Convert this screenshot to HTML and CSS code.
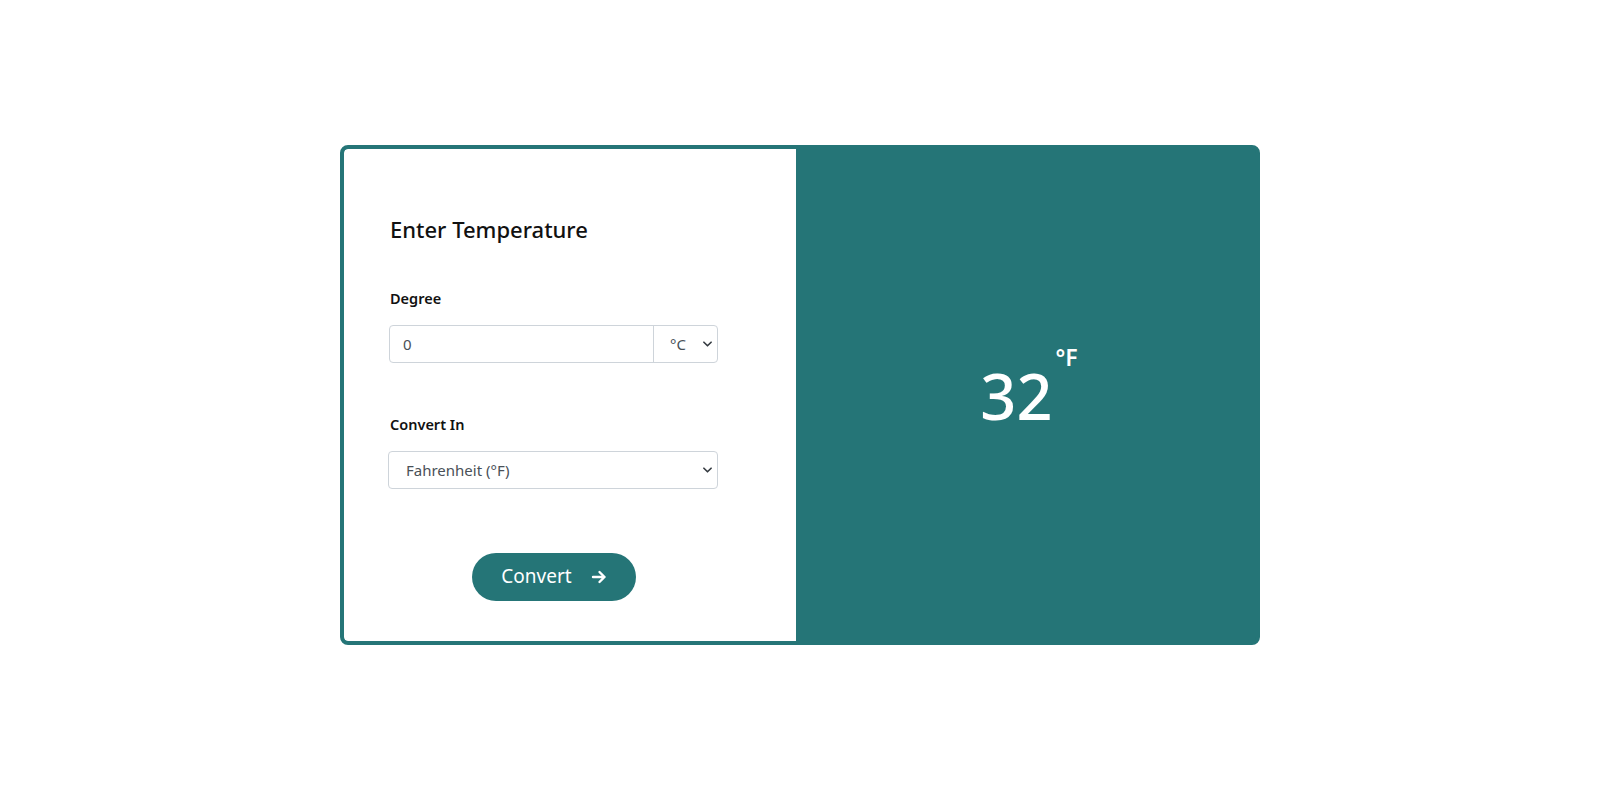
FILE: index.html
```html
<!DOCTYPE html>
<html lang="en">
<head>
<meta charset="utf-8">
<title>Temperature Converter</title>
<link rel="stylesheet" href="styles.css">
</head>
<body>
<main class="page">
  <section class="card">
    <div class="form-panel">
      <h2 class="title">Enter Temperature</h2>
      <label class="label" for="deg">Degree</label>
      <div class="input-group">
        <input id="deg" class="field" type="text" value="0">
        <div class="select-wrap unit">
          <select class="unit-select"><option>°C</option></select>
          <svg class="chev" viewBox="0 0 10 6" aria-hidden="true"><path d="M1 1l4 4 4-4" fill="none" stroke="#343a40" stroke-width="1.8" stroke-linecap="round" stroke-linejoin="round"/></svg>
        </div>
      </div>
      <label class="label label-second" for="to">Convert In</label>
      <div class="select-wrap full">
        <select id="to" class="full-select"><option>Fahrenheit (°F)</option></select>
        <svg class="chev" viewBox="0 0 10 6" aria-hidden="true"><path d="M1 1l4 4 4-4" fill="none" stroke="#343a40" stroke-width="1.8" stroke-linecap="round" stroke-linejoin="round"/></svg>
      </div>
      <div class="actions">
        <button class="btn" type="button">Convert
          <svg class="arrow" viewBox="0 0 16 14" aria-hidden="true"><path d="M2 7h11.5M8.5 2l5 5-5 5" fill="none" stroke="#fff" stroke-width="2.4" stroke-linecap="round" stroke-linejoin="round"/></svg>
        </button>
      </div>
    </div>
    <div class="result-panel">
      <div class="result"><span class="value">32</span><sup class="unit-sup">°F</sup></div>
    </div>
  </section>
</main>
</body>
</html>
```

FILE: styles.css
```css
* { box-sizing: border-box; }
html, body { margin: 0; padding: 0; background: #fff; }
body { font-family: "Noto Sans", "Open Sans", sans-serif; color: #212529; }

.page {
  display: flex;
  justify-content: center;
  padding-top: 145px;
}

.card {
  width: 920px;
  height: 500px;
  display: flex;
  border: 4px solid #257577;
  border-radius: 8px;
  background: #257577;
  overflow: hidden;
}

.form-panel {
  width: 452px;
  background: #fff;
  padding: 65px 78px 0 46px;
  display: flex;
  flex-direction: column;
  border-radius: 4px 0 0 4px;
}

.title {
  margin: 0;
  font-size: 22px;
  font-weight: 500;
  line-height: 30px;
  color: #111;
}

.label {
  display: block;
  margin-top: 43px;
  font-size: 14.5px;
  font-weight: 600;
  line-height: 22px;
  color: #111;
}
.label-second { margin-top: 50px; }

.input-group {
  margin-top: 16px;
  margin-left: -1px;
  display: flex;
  height: 38px;
  border: 1px solid #ced4da;
  border-radius: 4px;
}

.field {
  flex: 1;
  min-width: 0;
  border: 0;
  outline: none;
  padding: 0 13px;
  font: 15px "Noto Sans", sans-serif;
  color: #495057;
  background: transparent;
  border-radius: 4px 0 0 4px;
}

.select-wrap { position: relative; }
.unit { width: 64px; border-left: 1px solid #ced4da; }

.unit-select, .full-select {
  appearance: none;
  -webkit-appearance: none;
  border: 0;
  outline: none;
  background: transparent;
  font: 15px "Noto Sans", sans-serif;
  color: #495057;
  width: 100%;
  height: 100%;
}
.unit-select { padding: 0 0 0 16px; }

.full {
  margin-top: 16px;
  margin-left: -2px;
  height: 38px;
  border: 1px solid #ced4da;
  border-radius: 4px;
}
.full-select { padding: 0 0 0 17px; }

.chev {
  position: absolute;
  right: 5px;
  top: 15px;
  width: 9px;
  height: 6px;
  pointer-events: none;
}

.actions {
  display: flex;
  justify-content: center;
  margin-top: 64px;
}

.btn {
  width: 164px;
  height: 48px;
  border: 0;
  border-radius: 24px;
  background: #257577;
  color: #fff;
  font: 19px "Noto Sans", sans-serif;
  display: flex;
  align-items: center;
  justify-content: center;
  gap: 19px;
  padding: 0 0 2px 0;
}
.arrow { width: 16px; height: 14px; margin-top: 2px; }

.result-panel {
  flex: 1;
  display: flex;
  align-items: center;
  justify-content: center;
  color: #fff;
}

.result {
  display: flex;
  align-items: flex-start;
  margin-left: 6px;
  margin-top: 0;
}
.value {
  font-size: 63px;
  line-height: 1;
  font-weight: 500;
}
.unit-sup {
  font-size: 23px;
  font-weight: 600;
  line-height: 1;
  margin-left: 3px;
  margin-top: -18px;
}
```
